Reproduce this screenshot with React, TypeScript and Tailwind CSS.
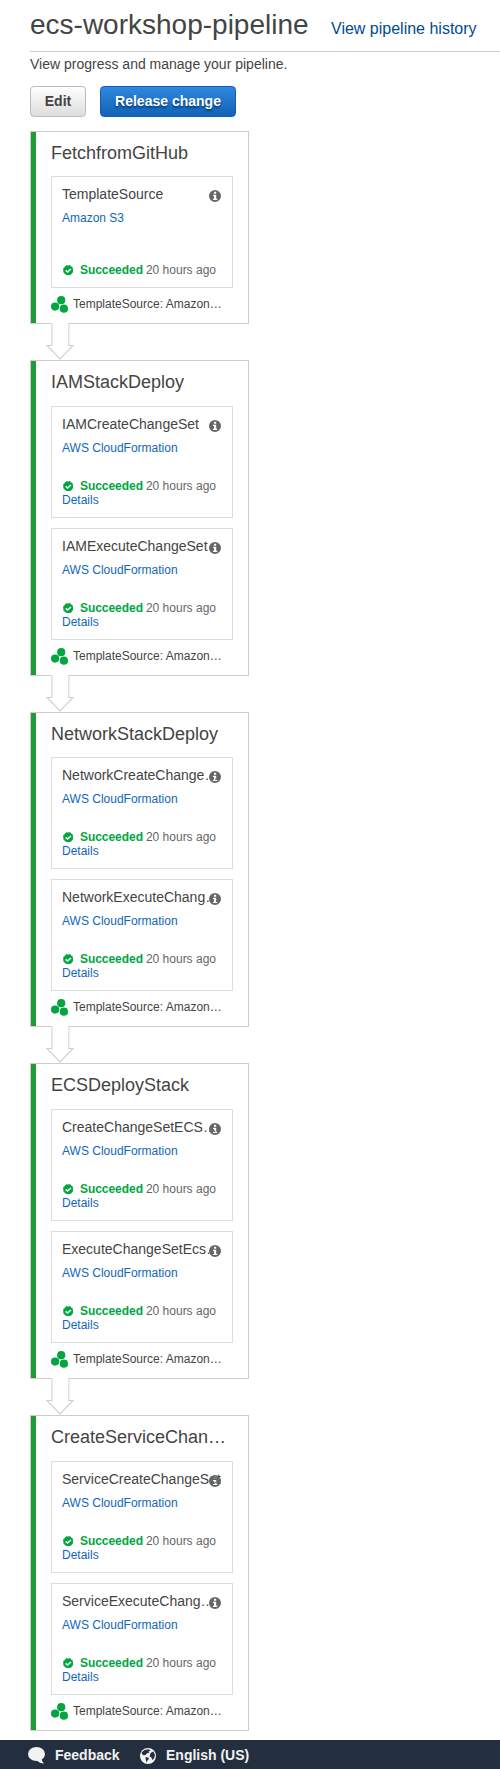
import React from "react";

type Action = { name: string; provider: string; details?: boolean };
type Stage = { name: string; head: string; actions: Action[] };

const CF = "AWS CloudFormation";
const stages: Stage[] = [
  { name: "FetchfromGitHub", head: "h-[44px]", actions: [{ name: "TemplateSource", provider: "Amazon S3" }] },
  {
    name: "IAMStackDeploy",
    head: "h-[45px]",
    actions: [
      { name: "IAMCreateChangeSet", provider: CF, details: true },
      { name: "IAMExecuteChangeSet", provider: CF, details: true },
    ],
  },
  {
    name: "NetworkStackDeploy",
    head: "h-[44px]",
    actions: [
      { name: "NetworkCreateChangeSet", provider: CF, details: true },
      { name: "NetworkExecuteChangeSet", provider: CF, details: true },
    ],
  },
  {
    name: "ECSDeployStack",
    head: "h-[45px]",
    actions: [
      { name: "CreateChangeSetECSStack", provider: CF, details: true },
      { name: "ExecuteChangeSetEcsStack", provider: CF, details: true },
    ],
  },
  {
    name: "CreateServiceChangeSet",
    head: "h-[45px]",
    actions: [
      { name: "ServiceCreateChangeSet", provider: CF, details: true },
      { name: "ServiceExecuteChangeSet", provider: CF, details: true },
    ],
  },
];

function InfoIcon() {
  return (
    <svg className="absolute top-[13px] right-[11px] size-3" viewBox="0 0 12 12">
      <path
        fillRule="evenodd"
        d="M6 0a6 6 0 1 1 0 12a6 6 0 1 1 0-12zM5 1.8h2.2v1.9H5zM4 4.7h3.2v4h1V10H4V8.7h1V6H4z"
        fill="#666"
      />
    </svg>
  );
}

function CheckIcon() {
  return (
    <svg className="mr-[7px] ml-[0.5px] size-[10.5px] shrink-0" viewBox="0 0 10 10">
      <circle cx="5" cy="5" r="4.6" fill="#00a63f" />
      <circle cx="5" cy="5" r="4.6" fill="none" stroke="#00a63f" strokeWidth="0.8" strokeDasharray="2.2 1.41" />
      <path d="M2.6 5.1 4.4 6.7 7.5 3.8" fill="none" stroke="#fff" strokeWidth="1.5" />
    </svg>
  );
}

function RevisionIcon() {
  return (
    <svg className="mt-[8px] h-[17px] w-[17px] shrink-0" viewBox="0 0 17 17" fill="#00a63f">
      <circle cx="10.2" cy="4.2" r="4.1" />
      <circle cx="4.1" cy="10.6" r="4.1" />
      <circle cx="12.9" cy="12.7" r="4.1" />
    </svg>
  );
}

function Arrow() {
  return (
    <svg className="relative -mt-px ml-[16px] block h-[37px] w-[28px]" viewBox="0 0 28 37">
      <path d="M5 0h18v23h4.5L14 36 .5 23H5z" fill="#fff" />
      <path d="M5.75 0v22.5M22.75 0v22.5" stroke="#e0e0e0" strokeWidth="1.5" fill="none" />
      <path d="M6.5 22.5H1L14 36 27 22.5H22" stroke="#cfcfcf" strokeWidth="1.1" fill="none" />
    </svg>
  );
}

function ActionCard({ action }: { action: Action }) {
  return (
    <div className="relative flex h-[112px] w-[182px] flex-col border border-[#ddd] pt-[9px] pr-[11px] pb-[10px] pl-[10px]">
      <div className="h-4 truncate text-[14px] leading-[17px] text-[#444]">{action.name}</div>
      <a className="mt-[9px] text-[12px] leading-[14px] text-[#1166bb]">{action.provider}</a>
      <div className="mt-auto text-[12px] leading-[14px] whitespace-nowrap text-[#666]">
        <div className="flex items-center">
          <CheckIcon />
          <b className="mr-[3px] tracking-[-0.05px] text-[#00a63f]">Succeeded</b>20 hours ago
        </div>
        {action.details && <a className="block text-[#1166bb]">Details</a>}
      </div>
      <InfoIcon />
    </div>
  );
}

function StageBox({ stage }: { stage: Stage }) {
  return (
    <section className="flex w-[219px] border border-[#ccc]">
      <div className="w-[5px] shrink-0 bg-[#1d9d33]" />
      <div className="ml-[15px] w-[182px]">
        <div className={stage.head + " w-[176px] truncate pt-[10px] text-[18px] leading-[22px] text-[#444]"}>{stage.name}</div>
        <div className="flex flex-col gap-[10px]">
          {stage.actions.map((a) => (
            <ActionCard key={a.name} action={a} />
          ))}
        </div>
        <div className="flex h-[35px]">
          <RevisionIcon />
          <span className="mt-[9px] ml-[5px] text-[12px] leading-[14px] whitespace-nowrap text-[#444]">TemplateSource: Amazon…</span>
        </div>
      </div>
    </section>
  );
}

export default function App() {
  return (
    <div className="flex h-[1769px] w-[500px] flex-col overflow-hidden bg-white font-['Liberation_Sans',Arial,sans-serif]">
      <main className="flex-1 pl-[30px]">
        <header className="flex h-[52px] items-baseline border-b border-[#ccc] pt-[8px] whitespace-nowrap">
          <h1 className="w-[301px] text-[28px] leading-[34px] text-[#444]">ecs-workshop-pipeline</h1>
          <a className="text-[16px] text-[#004b91]">View pipeline history</a>
        </header>
        <p className="mt-[4px] text-[14px] leading-[17px] text-[#444]">View progress and manage your pipeline.</p>
        <div className="mt-[13px] flex gap-[14px] text-[14px] font-bold">
          <button className="h-[31px] w-[56px] rounded-[4px] border border-[#bbb] bg-gradient-to-b from-white to-[#ddd] text-[#444]">Edit</button>
          <button className="h-[31px] w-[136px] rounded-[4px] border border-[#0f5fb0] bg-gradient-to-b from-[#2e87e0] to-[#1163b6] text-white [text-shadow:0_2px_2px_#06396f]">
            Release change
          </button>
        </div>
        <div className="mt-[14px]">
          {stages.map((s, i) => (
            <React.Fragment key={s.name}>
              <StageBox stage={s} />
              {i < stages.length - 1 && <Arrow />}
            </React.Fragment>
          ))}
        </div>
      </main>
      <footer className="flex h-[29px] items-center bg-[#232f3e] pt-[2px] pl-7 text-[14px] leading-[17px] font-bold text-[#f2f2f2]">
        <svg className="mr-[10px] size-[17px]" viewBox="0 0 17 17" fill="#f2f2f2">
          <ellipse cx="8.5" cy="7" rx="8.5" ry="7" />
          <path d="M9 13.5 13.5 11.5Q13.5 14.5 16 16.5 11.5 16.5 9 13.5z" />
        </svg>
        <span className="w-[85px]">Feedback</span>
        <svg className="mr-[10px] size-4" viewBox="0 0 16 16">
          <circle cx="8" cy="8" r="8" fill="#f2f2f2" />
          <path d="M1.5 4.5 4.5 2 8.5 1.2 10.5 2.5 8.5 3.4 9.2 5 7 5.2 5.5 7 3.6 7.2 2.2 6.2zM10.5 5 13.3 3.6 15 7 14 10.5 12.2 12 11.5 9.5 9.6 8.4zM5.5 9 8.6 9.8 8.8 11.3 7.4 12.6 6.8 14.8 5.8 12z" fill="#232f3e" />
        </svg>
        <span>English (US)</span>
      </footer>
    </div>
  );
}
